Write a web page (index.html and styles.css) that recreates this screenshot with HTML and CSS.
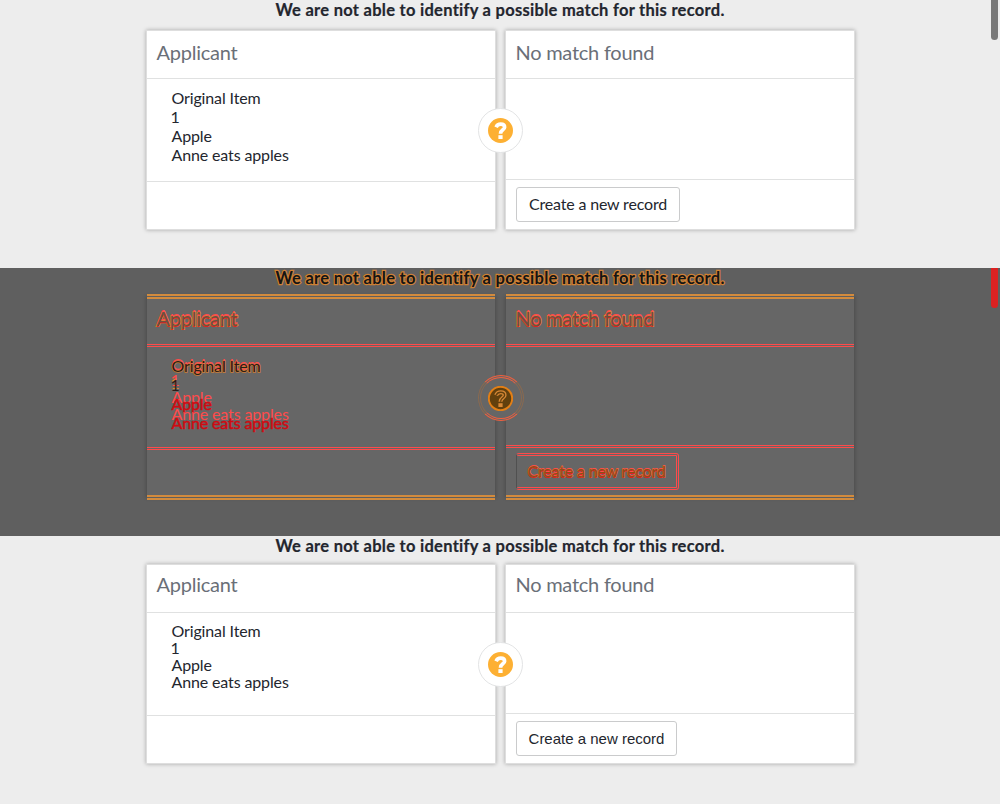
FILE: index.html
```html
<!DOCTYPE html>
<html lang="en">
<head>
<meta charset="utf-8">
<title>Record match</title>
<link rel="stylesheet" href="styles.css">
</head>
<body>
<section class="pane before">
  <h1 class="title"><span>We are not able to identify a possible match for this record.</span></h1>
  <div class="cards">
    <article class="card">
      <h2 class="head"><span>Applicant</span></h2>
      <div class="body"><p class="l1">Original Item</p><p class="l2">1</p><p class="l3">Apple</p><p class="l4">Anne eats apples</p></div>
      <div class="foot"></div>
    </article>
    <article class="card action">
      <h2 class="head nomatch"><span>No match found</span></h2>
      <div class="body"></div>
      <div class="foot"><button class="btn"><span>Create a new record</span></button></div>
    </article>
    <div class="badge"><svg viewBox="0 0 25 25"><circle class="disc" cx="12.5" cy="12.5" r="12.5"/><path class="hook" d="M8.1 9.2C9.1 6.8 10.7 6.2 12.7 6.2C15.2 6.2 16.6 7.5 16.6 9.2C16.6 12 12.5 11.6 12.5 15.7"/><rect class="dot" x="10.4" y="17.2" width="4.2" height="3.8"/></svg></div>
  </div>
  <i class="thumb"></i>
</section>
<section class="pane diff">
  <h1 class="title"><span>We are not able to identify a possible match for this record.</span></h1>
  <div class="cards">
    <article class="card">
      <h2 class="head"><span>Applicant</span></h2>
      <div class="body"><p class="l1">Original Item</p><p class="l2">1</p><p class="l3">Apple</p><p class="l4">Anne eats apples</p></div>
      <div class="foot"></div>
    </article>
    <article class="card action">
      <h2 class="head nomatch"><span>No match found</span></h2>
      <div class="body"></div>
      <div class="foot"><button class="btn"><span>Create a new record</span></button></div>
    </article>
    <div class="badge"><svg viewBox="0 0 25 25"><circle class="disc" cx="12.5" cy="12.5" r="11.7"/><path class="hook" d="M8.1 9.2C9.1 6.8 10.7 6.2 12.7 6.2C15.2 6.2 16.6 7.5 16.6 9.2C16.6 12 12.5 11.6 12.5 15.7"/><rect class="dot" x="10.4" y="17.2" width="4.2" height="3.8"/><path class="core" d="M8.1 9.2C9.1 6.8 10.7 6.2 12.7 6.2C15.2 6.2 16.6 7.5 16.6 9.2C16.6 12 12.5 11.6 12.5 15.7"/></svg></div>
  </div>
  <i class="thumb"></i>
</section>
<section class="pane after">
  <h1 class="title"><span>We are not able to identify a possible match for this record.</span></h1>
  <div class="cards">
    <article class="card">
      <h2 class="head"><span>Applicant</span></h2>
      <div class="body"><p class="l1">Original Item</p><p class="l2">1</p><p class="l3">Apple</p><p class="l4">Anne eats apples</p></div>
      <div class="foot"></div>
    </article>
    <article class="card action">
      <h2 class="head nomatch"><span>No match found</span></h2>
      <div class="body"></div>
      <div class="foot"><button class="btn"><span>Create a new record</span></button></div>
    </article>
    <div class="badge"><svg viewBox="0 0 25 25"><circle class="disc" cx="12.5" cy="12.5" r="12.5"/><path class="hook" d="M8.1 9.2C9.1 6.8 10.7 6.2 12.7 6.2C15.2 6.2 16.6 7.5 16.6 9.2C16.6 12 12.5 11.6 12.5 15.7"/><rect class="dot" x="10.4" y="17.2" width="4.2" height="3.8"/></svg></div>
  </div>
</section>
</body>
</html>
```
FILE: styles.css
```css
* { box-sizing: border-box; }
body { margin: 0; background: #ededed; color: #23262e; font-family: Lato, "Open Sans", sans-serif; font-size: 16px; overflow: hidden; }
h1, h2, p { margin: 0; font-weight: 400; }
.pane { position: relative; height: 268px; overflow: hidden; background: #ededed; }
.title { height: 31px; text-align: center; font-size: 16.5px; line-height: 21px; font-weight: 700; letter-spacing: .28px; -webkit-text-stroke: .2px #23262e; }
.cards { position: relative; display: grid; grid-template-columns: 348px 348px; column-gap: 11px; width: 707px; height: 198px; margin-left: 147px; }
.card { display: grid; grid-template-rows: 48px 103px 47px; background: #fff; box-shadow: 0 0 0 1px #dedede, 0 0 4px 1px rgba(0,0,0,.3); }
.action { grid-template-rows: 48px 101px 49px; }
.head { padding: 9px 0 0 9.5px; border-bottom: 1px solid #e0e1e1; color: #6a6f78; font-size: 20px; line-height: 24px; letter-spacing: -.25px; }
.body { padding: 9px 0 0 24.5px; border-bottom: 1px solid #e0e1e1; line-height: 19px; letter-spacing: -.13px; }
.l2 { margin-left: -1px; }
.foot { padding: 7px 0 0 10px; }
.btn { display: block; width: 164px; height: 35px; padding: 0; border: 1px solid #cacbcc; border-radius: 3px; background: #fff; color: #23262e; font: 16px/31px Lato, sans-serif; letter-spacing: -.17px; white-space: nowrap; }
.btn span { display: block; height: 33px; }
.badge { position: absolute; left: 331px; top: 77px; display: grid; place-items: center; width: 45px; height: 45px; border: 1px solid #e3e4e5; border-radius: 50%; background: #fff; }
.badge svg { width: 25px; height: 25px; margin-right: 1px; }
.disc { fill: #fdb033; }
.hook { fill: none; stroke: #fff; stroke-width: 3.7; }
.dot { fill: #fff; }
.thumb { position: absolute; top: 0; left: 991px; width: 7px; height: 40px; border-radius: 0 0 4px 4px; background: #797979; }

.after .title { height: 29px; line-height: 20px; }
.after .head { padding-top: 7px; }
.after .body { line-height: 17px; }
.after .btn { width: 161px; font-family: "Liberation Sans", sans-serif; font-size: 15px; line-height: 33px; letter-spacing: 0; }

/* Difference view: outlined strokes over a dimmed copy */
.diff { background: #5f5f5f; color: #151515; }
.diff .title { height: 29px; -webkit-text-stroke: 2.4px #cf8033; paint-order: stroke fill; }
.diff .cards { height: 200px; }
.diff .card { grid-template-rows: 48px 103px 45px; background: #666; border: solid #d38b3d; border-width: 2px 0; box-shadow: 0 -1px #5f5f5f, 0 -3px #d38b3d, 0 1px #5f5f5f, 0 3px #d38b3d, 0 0 4px 1px rgba(0,0,0,.2); }
.diff .action { grid-template-rows: 48px 101px 47px; }
.diff .head, .diff .body { border-bottom: 3px double #ff4b4b; }
.diff .head { padding-top: 7px; color: #6b5240; -webkit-text-stroke: 1.8px #d78836; paint-order: stroke fill; text-shadow: 0 -2px #ff4b4b, 0 1px #e02020; }
.diff .body { color: #2b1b16; }
.diff .l1 { -webkit-text-stroke: 1.6px #cc7d35; paint-order: stroke fill; text-shadow: 0 -2px #ff4b4b; }
.diff .l2 { text-shadow: 0 -5px #ff4b4b, 0 -2px #d78836; }
.diff .l3 { color: #cf0b12; text-shadow: 0 -7px #ff4b4b; -webkit-text-stroke: .5px; }
.diff .l4 { color: #cf0b12; text-shadow: 0 -9px #ff4b4b; -webkit-text-stroke: .5px; }
.diff .foot { padding-top: 5px; }
.diff .btn { width: 163px; height: 37px; border: 3px double #ff4b4b; border-left: 1px solid #505050; background: none; color: #8a5018; line-height: 29px; -webkit-text-stroke: 1.4px #cf7c2c; paint-order: stroke fill; text-shadow: 0 -1px #ff4b4b, 0 1px #dc2222; }
.diff .badge { top: 78px; width: 46px; height: 46px; border: 3px double #f0603f; border-left-color: #8a6a50; border-right-color: #8a6a50; background: #666; }
.diff .badge svg { margin-right: 2px; }
.diff .disc { fill: #62400d; stroke: #e27f16; stroke-width: 2; }
.diff .hook { stroke: #d78836; stroke-width: 4; }
.diff .core { fill: none; stroke: #62400d; stroke-width: 1.4; }
.diff .dot { fill: #d78836; }
.diff .thumb { background: #db2222; }
```
